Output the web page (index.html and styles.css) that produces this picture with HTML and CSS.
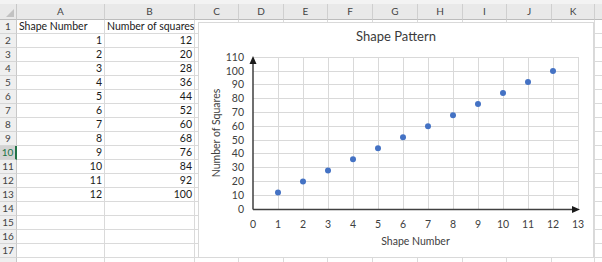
FILE: index.html
```html
<!DOCTYPE HTML>
<html>
<head>
<meta charset="utf-8" />
<title>Shape Pattern</title>
<link rel="stylesheet" href="styles.css">
</head>
<body>
<div class="topbar"></div>
<div class="sheet">
	<div class="row heads">
		<div class="rh corner"></div><div class="ch">A</div><div class="ch">B</div><div class="ch">C</div><div class="ch">D</div><div class="ch">E</div><div class="ch">F</div><div class="ch">G</div><div class="ch">H</div><div class="ch">I</div><div class="ch">J</div><div class="ch">K</div><div class="ch"></div>
	</div>
	<div class="row"><div class="rh">1</div><div class="cell">Shape Number</div><div class="cell">Number of squares</div><div class="cell"></div><div class="cell"></div><div class="cell"></div><div class="cell"></div><div class="cell"></div><div class="cell"></div><div class="cell"></div><div class="cell"></div><div class="cell"></div><div class="cell"></div></div>
	<div class="row"><div class="rh">2</div><div class="cell num">1</div><div class="cell num">12</div><div class="cell"></div><div class="cell"></div><div class="cell"></div><div class="cell"></div><div class="cell"></div><div class="cell"></div><div class="cell"></div><div class="cell"></div><div class="cell"></div><div class="cell"></div></div>
	<div class="row"><div class="rh">3</div><div class="cell num">2</div><div class="cell num">20</div><div class="cell"></div><div class="cell"></div><div class="cell"></div><div class="cell"></div><div class="cell"></div><div class="cell"></div><div class="cell"></div><div class="cell"></div><div class="cell"></div><div class="cell"></div></div>
	<div class="row"><div class="rh">4</div><div class="cell num">3</div><div class="cell num">28</div><div class="cell"></div><div class="cell"></div><div class="cell"></div><div class="cell"></div><div class="cell"></div><div class="cell"></div><div class="cell"></div><div class="cell"></div><div class="cell"></div><div class="cell"></div></div>
	<div class="row"><div class="rh">5</div><div class="cell num">4</div><div class="cell num">36</div><div class="cell"></div><div class="cell"></div><div class="cell"></div><div class="cell"></div><div class="cell"></div><div class="cell"></div><div class="cell"></div><div class="cell"></div><div class="cell"></div><div class="cell"></div></div>
	<div class="row"><div class="rh">6</div><div class="cell num">5</div><div class="cell num">44</div><div class="cell"></div><div class="cell"></div><div class="cell"></div><div class="cell"></div><div class="cell"></div><div class="cell"></div><div class="cell"></div><div class="cell"></div><div class="cell"></div><div class="cell"></div></div>
	<div class="row"><div class="rh">7</div><div class="cell num">6</div><div class="cell num">52</div><div class="cell"></div><div class="cell"></div><div class="cell"></div><div class="cell"></div><div class="cell"></div><div class="cell"></div><div class="cell"></div><div class="cell"></div><div class="cell"></div><div class="cell"></div></div>
	<div class="row"><div class="rh">8</div><div class="cell num">7</div><div class="cell num">60</div><div class="cell"></div><div class="cell"></div><div class="cell"></div><div class="cell"></div><div class="cell"></div><div class="cell"></div><div class="cell"></div><div class="cell"></div><div class="cell"></div><div class="cell"></div></div>
	<div class="row"><div class="rh">9</div><div class="cell num">8</div><div class="cell num">68</div><div class="cell"></div><div class="cell"></div><div class="cell"></div><div class="cell"></div><div class="cell"></div><div class="cell"></div><div class="cell"></div><div class="cell"></div><div class="cell"></div><div class="cell"></div></div>
	<div class="row"><div class="rh active">10</div><div class="cell num">9</div><div class="cell num">76</div><div class="cell"></div><div class="cell"></div><div class="cell"></div><div class="cell"></div><div class="cell"></div><div class="cell"></div><div class="cell"></div><div class="cell"></div><div class="cell"></div><div class="cell"></div></div>
	<div class="row"><div class="rh">11</div><div class="cell num">10</div><div class="cell num">84</div><div class="cell"></div><div class="cell"></div><div class="cell"></div><div class="cell"></div><div class="cell"></div><div class="cell"></div><div class="cell"></div><div class="cell"></div><div class="cell"></div><div class="cell"></div></div>
	<div class="row"><div class="rh">12</div><div class="cell num">11</div><div class="cell num">92</div><div class="cell"></div><div class="cell"></div><div class="cell"></div><div class="cell"></div><div class="cell"></div><div class="cell"></div><div class="cell"></div><div class="cell"></div><div class="cell"></div><div class="cell"></div></div>
	<div class="row"><div class="rh">13</div><div class="cell num">12</div><div class="cell num">100</div><div class="cell"></div><div class="cell"></div><div class="cell"></div><div class="cell"></div><div class="cell"></div><div class="cell"></div><div class="cell"></div><div class="cell"></div><div class="cell"></div><div class="cell"></div></div>
	<div class="row"><div class="rh">14</div><div class="cell"></div><div class="cell"></div><div class="cell"></div><div class="cell"></div><div class="cell"></div><div class="cell"></div><div class="cell"></div><div class="cell"></div><div class="cell"></div><div class="cell"></div><div class="cell"></div><div class="cell"></div></div>
	<div class="row"><div class="rh">15</div><div class="cell"></div><div class="cell"></div><div class="cell"></div><div class="cell"></div><div class="cell"></div><div class="cell"></div><div class="cell"></div><div class="cell"></div><div class="cell"></div><div class="cell"></div><div class="cell"></div><div class="cell"></div></div>
	<div class="row"><div class="rh">16</div><div class="cell"></div><div class="cell"></div><div class="cell"></div><div class="cell"></div><div class="cell"></div><div class="cell"></div><div class="cell"></div><div class="cell"></div><div class="cell"></div><div class="cell"></div><div class="cell"></div><div class="cell"></div></div>
	<div class="row"><div class="rh">17</div><div class="cell"></div><div class="cell"></div><div class="cell"></div><div class="cell"></div><div class="cell"></div><div class="cell"></div><div class="cell"></div><div class="cell"></div><div class="cell"></div><div class="cell"></div><div class="cell"></div><div class="cell"></div></div>
	<div class="row"><div class="rh"></div><div class="cell"></div><div class="cell"></div><div class="cell"></div><div class="cell"></div><div class="cell"></div><div class="cell"></div><div class="cell"></div><div class="cell"></div><div class="cell"></div><div class="cell"></div><div class="cell"></div><div class="cell"></div></div>

	<!-- chart floats over cells C1:K17, drawn in page coordinates -->
	<div class="chart">
		<svg width="396" height="236" viewBox="198 22 396 236">
			<rect class="frame" x="198.5" y="22.5" width="395" height="235" />
			<path class="grid" d="M253 57.5H578.5 M253 71.5H578.5 M253 84.5H578.5 M253 98.5H578.5 M253 112.5H578.5 M253 126.5H578.5 M253 140.5H578.5 M253 153.5H578.5 M253 167.5H578.5 M253 181.5H578.5 M253 195.5H578.5
				M278.5 57V209 M303.5 57V209 M328.5 57V209 M353.5 57V209 M378.5 57V209 M403.5 57V209 M428.5 57V209 M453.5 57V209 M478.5 57V209 M503.5 57V209 M528.5 57V209 M553.5 57V209 M578.5 57V209" />
			<path class="axis" d="M253 209.5V62 M253 209.5H573" />
			<polygon class="arrow" points="249.5,64 253,56 256.5,64" />
			<polygon class="arrow" points="572,206 580,209.5 572,213" />

			<text class="title" x="396" y="41">Shape Pattern</text>

			<g class="ylab">
				<text x="244" y="61">110</text>
				<text x="244" y="75">100</text>
				<text x="244" y="88">90</text>
				<text x="244" y="102">80</text>
				<text x="244" y="116">70</text>
				<text x="244" y="130">60</text>
				<text x="244" y="144">50</text>
				<text x="244" y="157">40</text>
				<text x="244" y="171">30</text>
				<text x="244" y="185">20</text>
				<text x="244" y="199">10</text>
				<text x="244" y="213">0</text>
			</g>
			<g class="xlab">
				<text x="253" y="228">0</text>
				<text x="278" y="228">1</text>
				<text x="303" y="228">2</text>
				<text x="328" y="228">3</text>
				<text x="353" y="228">4</text>
				<text x="378" y="228">5</text>
				<text x="403" y="228">6</text>
				<text x="428" y="228">7</text>
				<text x="453" y="228">8</text>
				<text x="478" y="228">9</text>
				<text x="503" y="228">10</text>
				<text x="528" y="228">11</text>
				<text x="553" y="228">12</text>
				<text x="578" y="228">13</text>
			</g>
			<text class="atitle" x="415.5" y="245">Shape Number</text>
			<text class="atitle" transform="translate(220 133) rotate(-90)">Number of Squares</text>

			<g class="dots">
				<circle cx="278" cy="192.4" r="3" />
				<circle cx="303" cy="181.4" r="3" />
				<circle cx="328" cy="170.4" r="3" />
				<circle cx="353" cy="159.3" r="3" />
				<circle cx="378" cy="148.3" r="3" />
				<circle cx="403" cy="137.2" r="3" />
				<circle cx="428" cy="126.2" r="3" />
				<circle cx="453" cy="115.2" r="3" />
				<circle cx="478" cy="104.1" r="3" />
				<circle cx="503" cy="93.1" r="3" />
				<circle cx="528" cy="82" r="3" />
				<circle cx="553" cy="71" r="3" />
			</g>
		</svg>
	</div>
</div>
</body>
</html>
```

FILE: styles.css
```css
*{ padding:0; margin:0; box-sizing:border-box; }
body{ width:602px; height:262px; overflow:hidden; background:#fff; font-family:Lato, "Liberation Sans", sans-serif; color:#1a1a1a; }
.topbar{ height:4px; background:#f3f3f3; }

.sheet{ position:relative; width:620px; font-size:10.5px; }
.sheet .row{ display:grid; grid-template-columns:17px 88px 90px 44px 45px 44px 45px 45px 45px 44px 45px 43px 25px; height:14px; }
.sheet .heads{ height:16px; }

.sheet .cell{ padding:0 2px; line-height:13px; white-space:nowrap; overflow:hidden; border-right:1px solid #dadada; border-bottom:1px solid #dadada; }
.sheet .cell.num{ text-align:right; }

.sheet .rh{ background:#efefef; color:#444; text-align:center; font-size:10px; line-height:13px; border-right:1px solid #c8c8c8; border-bottom:1px solid #d6d6d6; }
.sheet .rh.active{ background:#d3d3d3; color:#217346; border-right:2px solid #217346; }
.sheet .ch{ background:#e9e9e9; color:#444; text-align:center; font-size:10px; line-height:15px; border-right:1px solid #cfcfcf; border-bottom:1px solid #bcbcbc; }
.sheet .heads .rh{ background:#e9e9e9; border-bottom-color:#bcbcbc; position:relative; }
.sheet .corner:after{ content:""; position:absolute; right:2px; bottom:2px; border-left:8px solid transparent; border-bottom:8px solid #c2c2c2; }

.chart{ position:absolute; left:198px; top:18px; width:396px; height:236px; background:#fff; }
.chart svg{ display:block; font-family:Lato, "Liberation Sans", sans-serif; }
.chart .frame{ fill:#fff; stroke:#d9d9d9; stroke-width:1; }
.chart .grid{ fill:none; stroke:#d9d9d9; stroke-width:1; }
.chart .axis{ fill:none; stroke:#404040; stroke-width:1.5; }
.chart .arrow{ fill:#1a1a1a; }
.chart .title{ font-size:13px; fill:#3a3a3a; text-anchor:middle; }
.chart .ylab text{ font-size:10.5px; fill:#404040; text-anchor:end; }
.chart .xlab text{ font-size:10.5px; fill:#404040; text-anchor:middle; }
.chart .atitle{ font-size:10.5px; fill:#404040; text-anchor:middle; }
.chart .dots circle{ fill:#4472c4; }
```
